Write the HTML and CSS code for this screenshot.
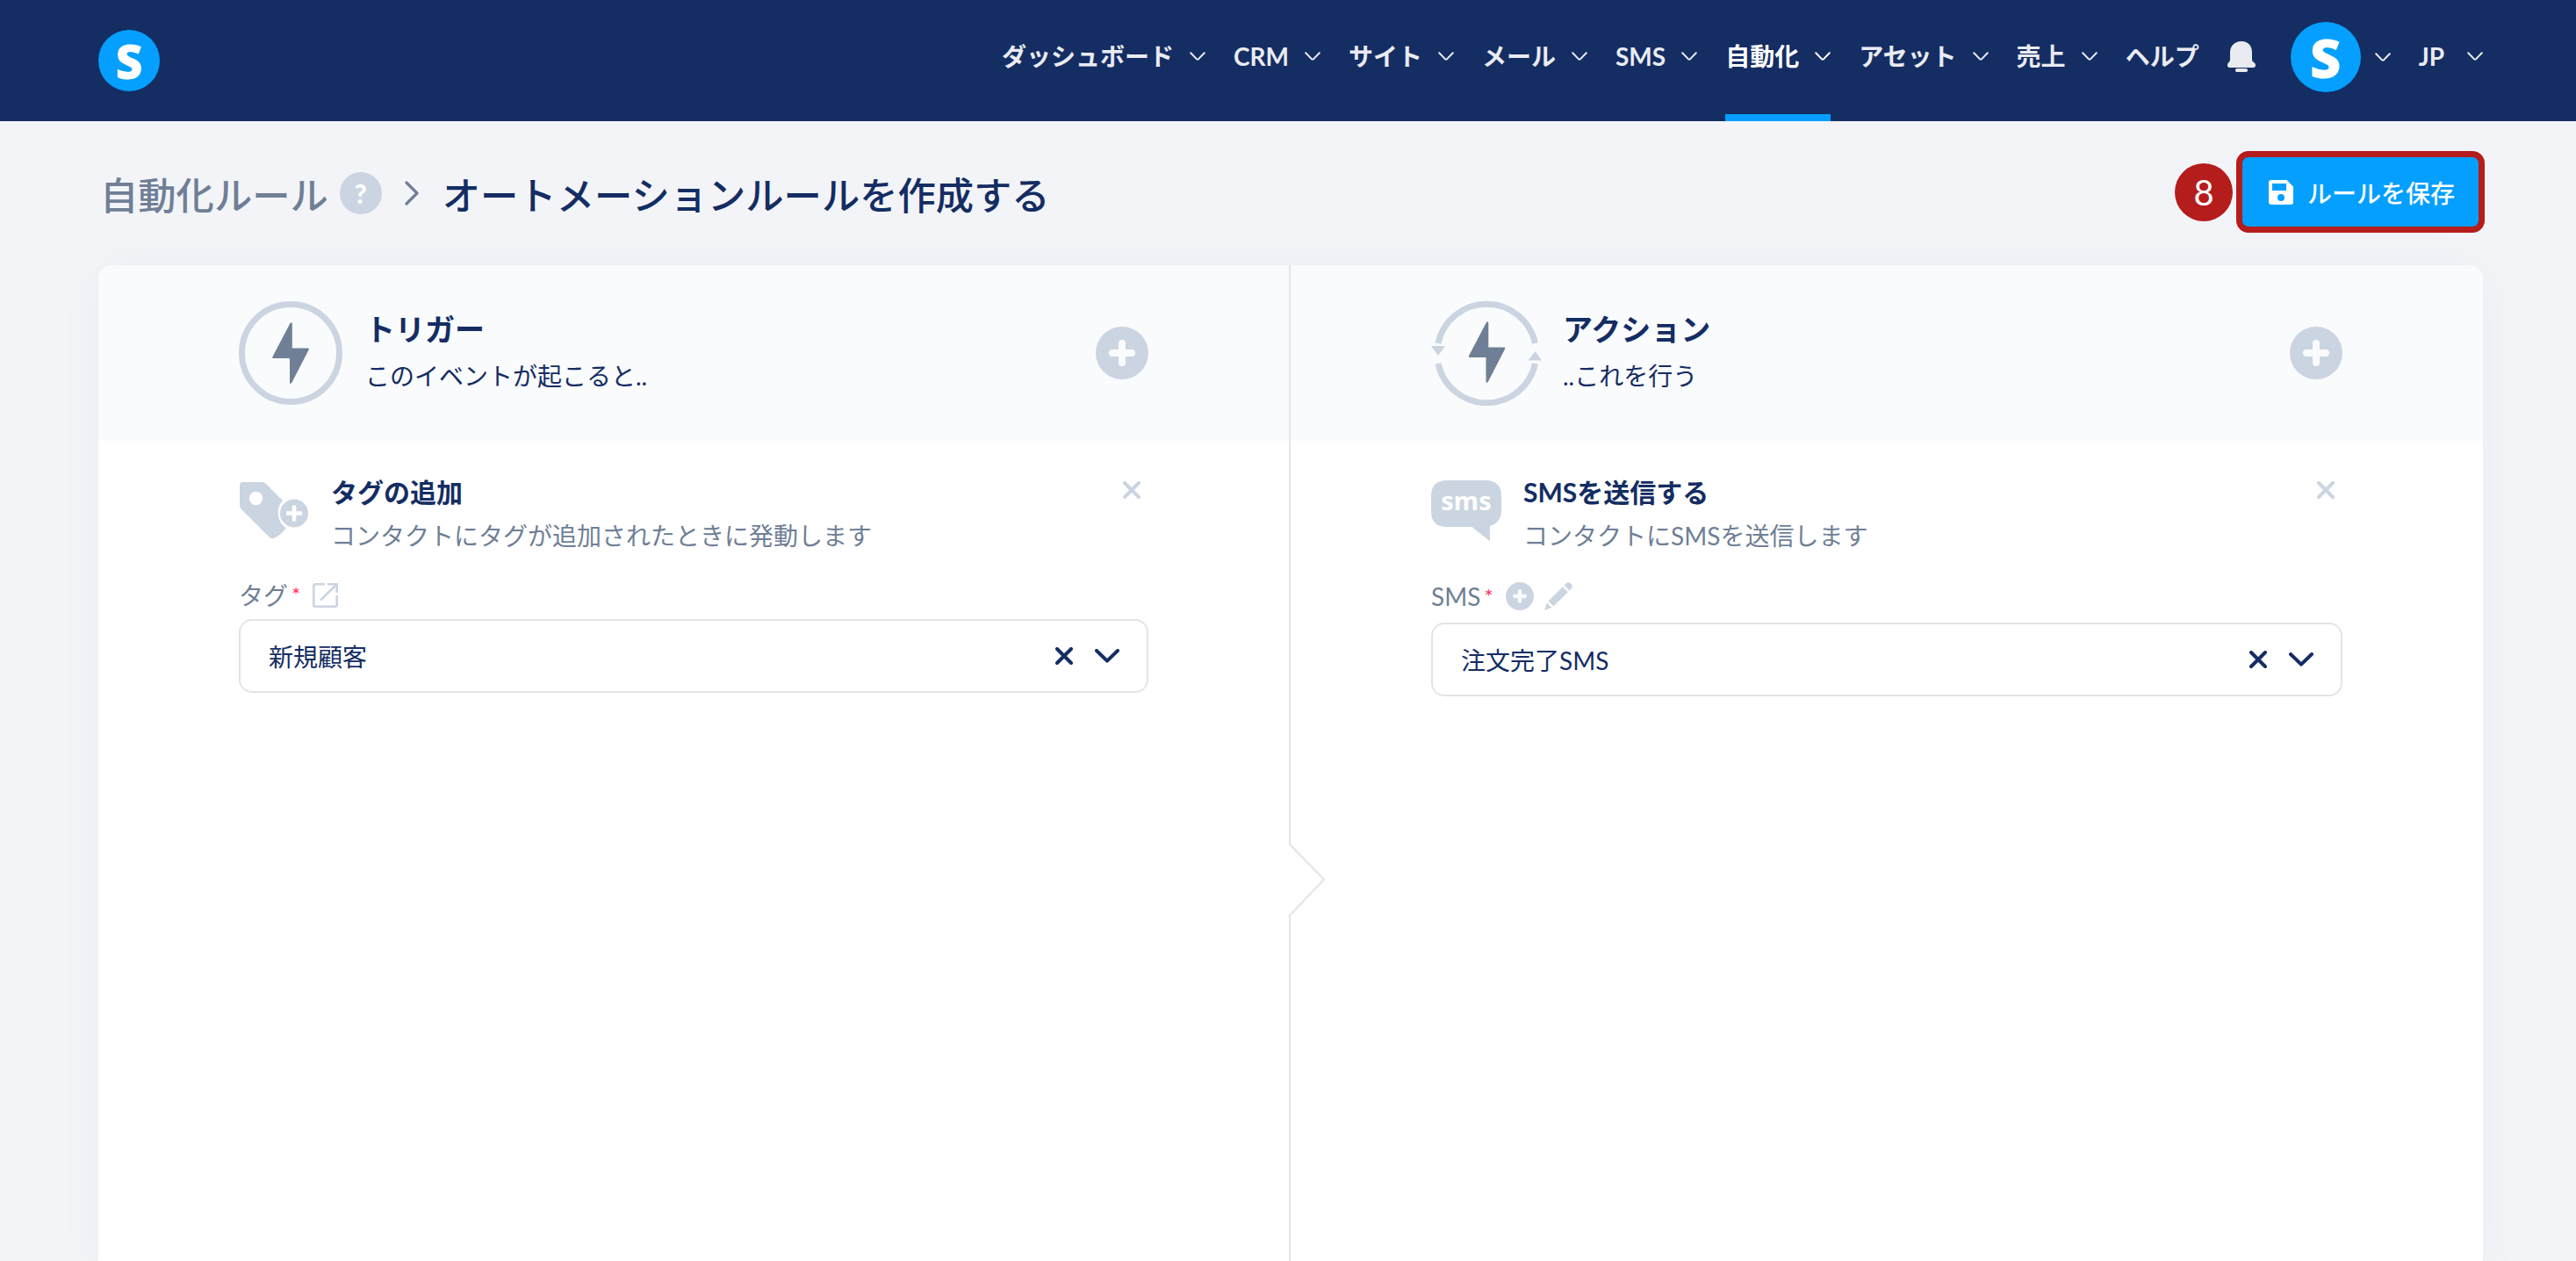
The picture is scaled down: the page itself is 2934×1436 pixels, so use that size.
FILE: index.html
```
<!DOCTYPE html>
<html lang="ja">
<head>
    <meta charset="UTF-8">
    <meta name="viewport" content="width=device-width, initial-scale=1.0">
    <title>オートメーションルールを作成する</title>
    <link rel="stylesheet" href="styles.css">
</head>
<body>
    <!-- Shared icons -->
    <svg class="sprite" width="0" height="0">
        <symbol id="chevron" viewBox="0 0 18 10"><path d="M1.2 1.2 L7.6 7.9 Q9 9.2 10.4 7.9 L16.8 1.2" fill="none" stroke="currentColor" stroke-width="2" stroke-linecap="round"/></symbol>
        <symbol id="chevron-bold" viewBox="0 0 28 16"><path d="M2 2 L14 13.6 L26 2" fill="none" stroke="currentColor" stroke-width="4" stroke-linecap="round" stroke-linejoin="round"/></symbol>
        <symbol id="cross" viewBox="0 0 20 20"><path d="M2 2 L18 18 M18 2 L2 18" fill="none" stroke="currentColor" stroke-width="4" stroke-linecap="round"/></symbol>
        <symbol id="plus" viewBox="0 0 60 60"><circle cx="30" cy="30" r="30" fill="currentColor"/><path d="M30 19 V41 M19 30 H41" fill="none" stroke="#fafbfd" stroke-width="8" stroke-linecap="round"/></symbol>
        <symbol id="bolt" viewBox="0 0 42 70"><path d="M20.5 1 Q22.8 -1 22.8 2 V29.5 H40.5 Q42.4 29.5 41.8 31 L22.5 68.6 Q20 71.5 20 68 V41 H1.5 Q-0.3 41 0.3 39.4 Z" fill="#6f7f96"/></symbol>
    </svg>

    <header class="header">
        <a class="logo" href="#">S</a>
        <nav class="nav">
            <a class="nav-item" href="#">ダッシュボード <svg class="chevron"><use href="#chevron"/></svg></a>
            <a class="nav-item" href="#">CRM <svg class="chevron"><use href="#chevron"/></svg></a>
            <a class="nav-item" href="#">サイト <svg class="chevron"><use href="#chevron"/></svg></a>
            <a class="nav-item" href="#">メール <svg class="chevron"><use href="#chevron"/></svg></a>
            <a class="nav-item" href="#">SMS <svg class="chevron"><use href="#chevron"/></svg></a>
            <a class="nav-item active" href="#">自動化 <svg class="chevron"><use href="#chevron"/></svg></a>
            <a class="nav-item" href="#">アセット <svg class="chevron"><use href="#chevron"/></svg></a>
            <a class="nav-item" href="#">売上 <svg class="chevron"><use href="#chevron"/></svg></a>
            <a class="nav-item" href="#">ヘルプ</a>
            <svg class="bell" viewBox="0 0 32 35"><path d="M16 0 C24 0 28 5.500 28 13 V21 Q28 23 30 24 Q32 25 32 27 Q32 30 29.500 30 H2.500 Q0 30 0 27 Q0 25 1.500 24 Q3 23 3 21 V13 C3 5.500 8 0 16 0 Z" fill="#eaebf1"/><rect x="9" y="31" width="14" height="4" rx="1.800" fill="#eaebf1"/></svg>
            <a class="account" href="#"><span class="avatar">S</span><svg class="chevron"><use href="#chevron"/></svg></a>
            <a class="lang" href="#">JP <svg class="chevron"><use href="#chevron"/></svg></a>
        </nav>
    </header>

    <main class="page">
        <div class="page-head">
            <h1 class="breadcrumb">
                <a class="parent" href="#">自動化ルール</a>
                <span class="help">?</span>
                <svg class="separator" viewBox="0 0 16 28"><path d="M2 2 L14 14 L2 26" fill="none" stroke="currentColor" stroke-width="3.200" stroke-linecap="round" stroke-linejoin="round"/></svg>
                <span>オートメーションルールを作成する</span>
            </h1>
            <div class="save">
                <span class="step">8</span>
                <button type="button" class="save-btn">
                    <svg class="save-icon" viewBox="0 0 28 28"><path fill-rule="evenodd" d="M3 0 H20.500 L28 7.500 V25 Q28 28 25 28 H3 Q0 28 0 25 V3 Q0 0 3 0 Z M4 4 V12 H20 V4 Z M14 16 A4 4 0 1 0 14 24 A4 4 0 1 0 14 16 Z" fill="#fff"/></svg>
                    <span>ルールを保存</span>
                </button>
            </div>
        </div>

        <div class="panel">
            <section class="column trigger">
                <div class="column-head">
                    <svg class="head-icon" width="118" height="118" viewBox="0 0 118 118"><circle cx="59" cy="59" r="55.500" fill="none" stroke="#cbd5e1" stroke-width="7"/><use href="#bolt" x="38" y="24" width="42" height="70"/></svg>
                    <div class="head-text">
                        <h2>トリガー</h2>
                        <p>このイベントが起こると..</p>
                    </div>
                    <svg class="add"><use href="#plus"/></svg>
                </div>
                <div class="rule">
                    <div class="rule-head">
                        <svg class="rule-icon" viewBox="0 0 80 70"><path d="M5 2 H26 Q29 2 31 4 L50 23 A21 21 0 0 0 54 54.500 Q48 62 41 65.500 Q37 67.500 34 64 L3 33 Q1 31 1 27 V6 Q1 2 5 2 Z" fill="#cbd5e1"/><circle cx="19.500" cy="20.500" r="7.700" fill="#fff"/><circle cx="63" cy="37.500" r="16" fill="#cbd5e1"/><path d="M63 28.500 V46.500 M54 37.500 H72" stroke="#fff" stroke-width="4.500"/></svg>
                        <div class="rule-text">
                            <h3>タグの追加</h3>
                            <p>コンタクトにタグが追加されたときに発動します</p>
                        </div>
                        <svg class="remove"><use href="#cross"/></svg>
                    </div>
                    <div class="label">
                        <span>タグ</span><span class="required">*</span>
                        <svg class="link-icon" viewBox="0 0 29 28"><path d="M14 1.300 H3.500 Q1.300 1.300 1.300 3.500 V24.500 Q1.300 26.700 3.500 26.700 H25.500 Q27.700 26.700 27.700 24.500 V14 M17 1.300 H27.700 V11 M27 2 L9 19.500" fill="none" stroke="#cbd5e1" stroke-width="2.600"/></svg>
                    </div>
                    <div class="select">
                        <span class="value">新規顧客</span>
                        <svg class="clear"><use href="#cross"/></svg>
                        <svg class="toggle"><use href="#chevron-bold"/></svg>
                    </div>
                </div>
                <svg class="arrow" viewBox="0 0 44 86"><path d="M0 1 L1.500 1 L41.500 42.500 L1.500 85 H0 Z" fill="#fff"/><path d="M1 1.500 L41 42.500 L1 84.500" fill="none" stroke="#e0e5e8" stroke-width="2"/></svg>
            </section>

            <section class="column action">
                <div class="column-head">
                    <svg class="head-icon" width="126" height="120" viewBox="0 0 126 120"><path d="M8 49 A56.500 56.500 0 0 1 118.500 49 M8 72 A56.500 56.500 0 0 0 118.500 72" fill="none" stroke="#cbd5e1" stroke-width="7"/><path d="M0 52 H16 L8 63 Z M110.500 68.500 H126 L118.500 58 Z" fill="#cbd5e1"/><use href="#bolt" x="42.500" y="24" width="42" height="70"/></svg>
                    <div class="head-text">
                        <h2>アクション</h2>
                        <p>..これを行う</p>
                    </div>
                    <svg class="add"><use href="#plus"/></svg>
                </div>
                <div class="rule">
                    <div class="rule-head">
                        <svg class="rule-icon" viewBox="0 0 80 70"><path d="M18 0 H62 Q80 0 80 18 V34 Q80 48 67 52 V69.500 L46.500 53 H18 Q0 53 0 35 V18 Q0 0 18 0 Z" fill="#cbd5e1"/><text class="sms-mark" x="40" y="33.500" text-anchor="middle">sms</text></svg>
                        <div class="rule-text">
                            <h3>SMSを送信する</h3>
                            <p>コンタクトにSMSを送信します</p>
                        </div>
                        <svg class="remove"><use href="#cross"/></svg>
                    </div>
                    <div class="label">
                        <span>SMS</span><span class="required">*</span>
                        <svg class="small-add"><use href="#plus"/></svg>
                        <svg class="pencil" viewBox="0 0 32 32"><path d="M22.500 3.500 L25 1.200 Q27.500 -1 30 1.500 L30.500 2 Q33 4.500 31 7 L28.500 9.500 Z M20.800 5.200 L26.800 11.200 L10.500 27.500 L4.500 21.500 Z M3 23.500 L8.500 29 L1.200 31.600 Q-0.300 32 0.400 30.500 Z" fill="#cbd5e1"/></svg>
                    </div>
                    <div class="select">
                        <span class="value">注文完了SMS</span>
                        <svg class="clear"><use href="#cross"/></svg>
                        <svg class="toggle"><use href="#chevron-bold"/></svg>
                    </div>
                </div>
            </section>
        </div>
    </main>
</body>
</html>
```
FILE: styles.css
```
* {
    box-sizing: border-box;
}

body {
    font-family: Lato, "Noto Sans CJK JP", sans-serif;
    font-size: 28px;
    background-color: #f3f4f8;
    color: #142d63;
    margin: 0;
    height: 1436px;
    overflow: hidden;
}

h1, h2, h3, p {
    margin: 0;
}

a {
    color: inherit;
    text-decoration: none;
}

svg {
    display: block;
    flex: none;
}

.sprite {
    position: absolute;
}

/* Header */
.header {
    display: flex;
    justify-content: space-between;
    height: 138px;
    padding: 0 106px 0 112px;
    background: #142d63;
    color: #eaebf1;
}

.logo, .avatar {
    display: flex;
    align-items: center;
    justify-content: center;
    border-radius: 50%;
    background: #049fff;
    color: #fff;
    font-family: "Open Sans", sans-serif;
    font-weight: 800;
}

.logo {
    width: 70px;
    height: 70px;
    margin-top: 34px;
    font-size: 54px;
    line-height: 70px;
}

.nav {
    display: flex;
    align-items: flex-start;
    gap: 32px;
    font-weight: bold;
}

.nav-item, .lang {
    display: flex;
    align-items: center;
    gap: 18px;
    height: 138px;
    padding-bottom: 10px;
    line-height: 40px;
}

.nav-item.active {
    color: #fff;
    box-shadow: inset 0 -8px 0 #049fff;
}

.chevron {
    width: 18px;
    height: 10px;
}

.bell {
    width: 32px;
    height: 35px;
    margin-top: 47px;
}

.account {
    display: flex;
    align-items: center;
    gap: 16px;
    height: 80px;
    margin-top: 25px;
    margin-left: 8px;
}

.avatar {
    width: 80px;
    height: 80px;
    font-size: 62px;
    line-height: 80px;
}

.lang {
    gap: 26px;
}

/* Page heading */
.page {
    padding: 34px 106px 0 112px;
}

.page-head {
    display: flex;
    justify-content: space-between;
    align-items: flex-start;
    height: 130px;
}

.breadcrumb {
    display: flex;
    align-items: center;
    height: 96px;
    padding-left: 2px;
    font-size: 43.3px;
    font-weight: 500;
}

.parent {
    color: #6f7f96;
}

.help {
    width: 48px;
    height: 48px;
    margin: 0 26px 0 13px;
    border-radius: 50%;
    background: #cbd5e1;
    color: #fff;
    font-size: 30px;
    font-weight: 900;
    line-height: 48px;
    text-align: center;
}

.separator {
    width: 16px;
    height: 28px;
    margin-right: 27px;
    color: #6f7f96;
}

.save {
    display: flex;
    align-items: center;
    gap: 4px;
    margin-right: -2px;
}

.step {
    width: 66px;
    height: 66px;
    border-radius: 50%;
    background: #b51c1c;
    color: #fff;
    font-size: 40px;
    line-height: 66px;
    text-align: center;
}

.save-btn {
    display: flex;
    align-items: center;
    gap: 16px;
    width: 283px;
    height: 93px;
    padding: 0 0 0 30px;
    border: 7px solid #b51c1c;
    border-radius: 14px;
    background: #049fff;
    color: #fff;
    font: inherit;
    font-weight: 500;
}

.save-icon {
    width: 28px;
    height: 28px;
}

/* Panel */
.panel {
    display: flex;
    width: 2716px;
    height: 1150px;
    border-radius: 16px 16px 0 0;
    background: #fff;
    box-shadow: 0 0 60px rgba(20, 45, 99, 0.03);
}

.column {
    width: 1358px;
}

.trigger {
    position: relative;
    border-right: 2px solid #e0e5e8;
}

.column-head {
    display: flex;
    align-items: center;
    height: 200px;
    padding: 0 160px;
    background: #fafbfd;
}

.trigger .column-head {
    border-radius: 16px 0 0 0;
}

.action .column-head {
    border-radius: 0 16px 0 0;
}

.head-text {
    flex: 1;
    margin-left: 26px;
}

.action .head-text {
    margin-left: 24px;
}

.head-text h2 {
    font-size: 34px;
    line-height: 52px;
}

.head-text p {
    line-height: 54px;
}

.add {
    width: 60px;
    height: 60px;
    color: #cbd5e1;
}

.rule {
    padding: 36px 160px 0;
}

.rule-head {
    display: flex;
    align-items: flex-start;
    height: 110px;
}

.rule-icon {
    width: 80px;
    height: 70px;
    margin-top: 9px;
}

.sms-mark {
    fill: #fff;
    font-family: "Noto Sans", sans-serif;
    font-size: 29px;
    font-weight: bold;
}

.rule-text {
    flex: 1;
    margin-left: 25px;
}

.rule-text h3 {
    font-size: 30px;
    line-height: 44px;
}

.rule-text p {
    color: #6f7f96;
    line-height: 56px;
}

.remove {
    width: 20px;
    height: 20px;
    margin: 10px 9px 0 0;
    color: #cbd5e1;
}

.label {
    display: flex;
    align-items: center;
    height: 57px;
    color: #6f7f96;
}

.action .label {
    height: 61px;
}

.required {
    margin: 0 14px 0 4px;
    color: #ff3366;
    font-size: 24px;
}

.link-icon {
    width: 29px;
    height: 28px;
    margin-top: 2px;
}

.small-add {
    width: 32px;
    height: 32px;
    color: #cbd5e1;
}

.pencil {
    width: 32px;
    height: 32px;
    margin-left: 12px;
}

.select {
    display: flex;
    align-items: center;
    height: 84px;
    padding: 0 31px 0 32px;
    border: 2px solid #e0e5e8;
    border-radius: 15px;
}

.value {
    flex: 1;
}

.clear {
    width: 20px;
    height: 20px;
    margin-right: 25px;
}

.toggle {
    width: 28px;
    height: 16px;
}

/* Notch over the column border */
.arrow {
    position: absolute;
    top: 657px;
    right: -43px;
    width: 44px;
    height: 86px;
}
```
